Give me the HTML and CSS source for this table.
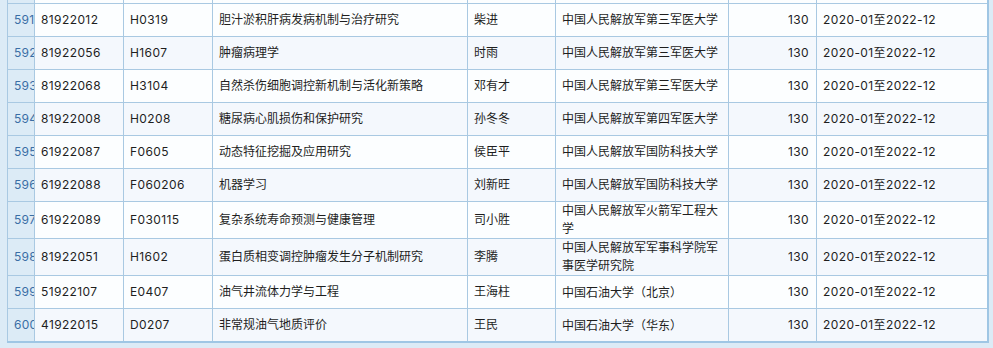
FILE: index.html
```html
<!DOCTYPE html>
<html lang="zh-CN">
<head>
<meta charset="utf-8">
<title>项目列表</title>
<link rel="stylesheet" href="styles.css">
</head>
<body>
<div class="wrap">
  <table class="grid">
    <colgroup>
      <col class="c-idx"><col class="c-no"><col class="c-code"><col class="c-title"><col class="c-name"><col class="c-inst"><col class="c-amt"><col class="c-date">
    </colgroup>
    <tbody>
      <tr class="tail"><td class="idx"></td><td></td><td></td><td></td><td></td><td></td><td></td><td></td></tr>
      <tr><td class="idx">591</td><td class="num">81922012</td><td class="num">H0319</td><td>胆汁淤积肝病发病机制与治疗研究</td><td>柴进</td><td>中国人民解放军第三军医大学</td><td class="num amt">130</td><td class="num">2020-01至2022-12</td></tr>
      <tr class="alt"><td class="idx">592</td><td class="num">81922056</td><td class="num">H1607</td><td>肿瘤病理学</td><td>时雨</td><td>中国人民解放军第三军医大学</td><td class="num amt">130</td><td class="num">2020-01至2022-12</td></tr>
      <tr><td class="idx">593</td><td class="num">81922068</td><td class="num">H3104</td><td>自然杀伤细胞调控新机制与活化新策略</td><td>邓有才</td><td>中国人民解放军第三军医大学</td><td class="num amt">130</td><td class="num">2020-01至2022-12</td></tr>
      <tr class="alt"><td class="idx">594</td><td class="num">81922008</td><td class="num">H0208</td><td>糖尿病心肌损伤和保护研究</td><td>孙冬冬</td><td>中国人民解放军第四军医大学</td><td class="num amt">130</td><td class="num">2020-01至2022-12</td></tr>
      <tr><td class="idx">595</td><td class="num">61922087</td><td class="num">F0605</td><td>动态特征挖掘及应用研究</td><td>侯臣平</td><td>中国人民解放军国防科技大学</td><td class="num amt">130</td><td class="num">2020-01至2022-12</td></tr>
      <tr class="alt"><td class="idx">596</td><td class="num">61922088</td><td class="num">F060206</td><td>机器学习</td><td>刘新旺</td><td>中国人民解放军国防科技大学</td><td class="num amt">130</td><td class="num">2020-01至2022-12</td></tr>
      <tr><td class="idx">597</td><td class="num">61922089</td><td class="num">F030115</td><td>复杂系统寿命预测与健康管理</td><td>司小胜</td><td>中国人民解放军火箭军工程大学</td><td class="num amt">130</td><td class="num">2020-01至2022-12</td></tr>
      <tr class="alt"><td class="idx">598</td><td class="num">81922051</td><td class="num">H1602</td><td>蛋白质相变调控肿瘤发生分子机制研究</td><td>李腾</td><td>中国人民解放军军事科学院军事医学研究院</td><td class="num amt">130</td><td class="num">2020-01至2022-12</td></tr>
      <tr><td class="idx">599</td><td class="num">51922107</td><td class="num">E0407</td><td>油气井流体力学与工程</td><td>王海柱</td><td>中国石油大学<span class="paren">（</span>北京<span class="paren">）</span></td><td class="num amt">130</td><td class="num">2020-01至2022-12</td></tr>
      <tr class="alt"><td class="idx">600</td><td class="num">41922015</td><td class="num">D0207</td><td>非常规油气地质评价</td><td>王民</td><td>中国石油大学<span class="paren">（</span>华东<span class="paren">）</span></td><td class="num amt">130</td><td class="num">2020-01至2022-12</td></tr>
    </tbody>
  </table>
</div>
</body>
</html>
```

FILE: styles.css
```css
html, body {
  margin: 0;
  padding: 0;
  background: #dcebf6;
}

.wrap {
  padding: 0 5px 0 7px;
  height: 348px;
  overflow: hidden;
  box-sizing: border-box;
}

.grid {
  border-collapse: collapse;
  table-layout: fixed;
  width: 980px;
  font-family: "Inter", "Noto Sans CJK SC", sans-serif;
  font-size: 12px;
  color: #1e1e1e;
  background: #fcfeff;
  border-right: 2px solid #9fc6e4;
  border-bottom: 2px solid #9fc6e4;
}

.c-idx { width: 27px; }
.c-no { width: 89px; }
.c-code { width: 89px; }
.c-title { width: 255px; }
.c-name { width: 88px; }
.c-inst { width: 173px; }
.c-amt { width: 88px; }
.c-date { width: 171px; }

.grid td {
  border: 1px solid #a9c9e2;
  height: 32px;
  padding: 0 6px;
  line-height: 18px;
  vertical-align: middle;
  overflow: hidden;
  white-space: normal;
}

.grid td.num {
  letter-spacing: 0.4px;
}

.grid tr.tail td {
  height: 3px;
  padding: 0;
  line-height: 0;
  border-top: 0;
}

.grid tr.alt td {
  background: #f4f8fd;
}

.grid td.idx,
.grid tr.alt td.idx {
  background: #dcebf6;
  color: #3a6ea5;
  white-space: nowrap;
  padding-right: 0;
  letter-spacing: 0.3px;
}

.grid td.amt {
  text-align: right;
  padding-right: 7px;
}

.paren {
  font-family: "Noto Sans CJK KR", sans-serif;
}
```
